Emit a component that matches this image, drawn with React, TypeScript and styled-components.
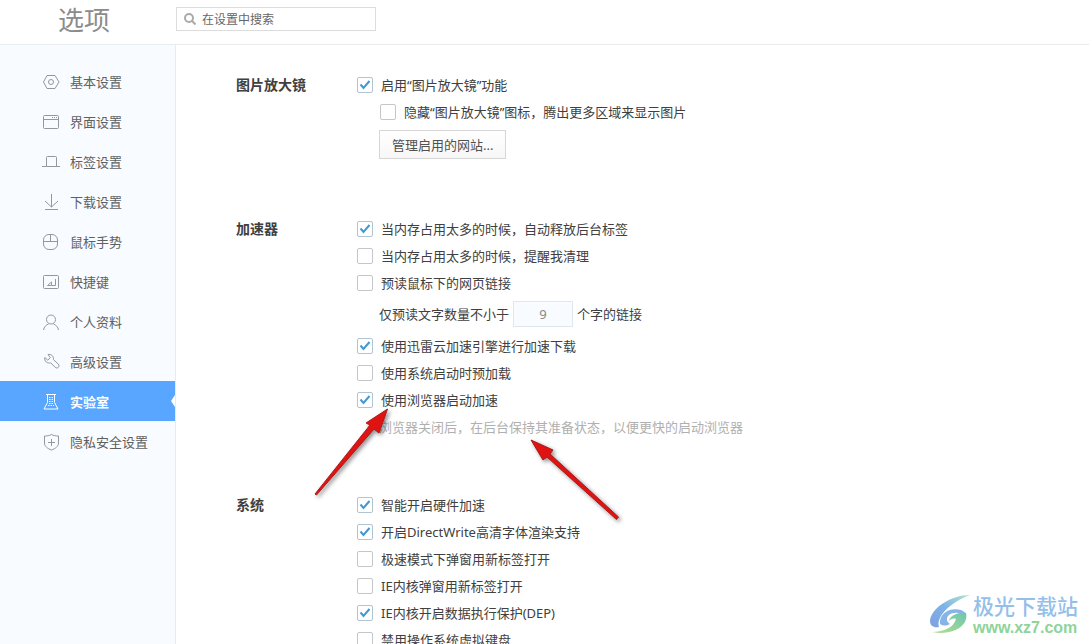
import React from "react";
import styled, { createGlobalStyle, css } from "styled-components";

const GlobalStyle = createGlobalStyle`
  *, *::before, *::after { box-sizing: border-box; }
  body {
    margin: 0;
    background: #fff;
    color: #404040;
    font: 13px/26px "Noto Sans", "Noto Sans CJK SC", sans-serif;
  }
  button, input { font: inherit; }
`;

const Page = styled.div`
  position: relative;
  display: flex;
  flex-direction: column;
  height: 100vh;
  overflow: hidden;
`;

const Header = styled.header`
  display: flex;
  align-items: center;
  flex: none;
  height: 45px;
  padding-bottom: 6px;
  border-bottom: 1px solid #e9ecef;
`;

const Title = styled.h1`
  width: 176px;
  margin: 0;
  padding: 2px 0 0 58px;
  color: #8c8c8c;
  font-size: 26px;
  font-weight: 400;
  line-height: 36px;
`;

const SearchBox = styled.label`
  display: flex;
  align-items: center;
  gap: 6px;
  width: 200px;
  height: 24px;
  padding: 0 7px;
  border: 1px solid #dcdcdc;
`;

const SearchInput = styled.input`
  flex: 1;
  min-width: 0;
  padding: 2px 0 0;
  border: 0;
  outline: 0;
  background: none;
  color: #555;
  font-size: 12px;
  line-height: 20px;
  &::placeholder { color: #666; opacity: 1; }
`;

const Body = styled.div`
  display: flex;
  flex: 1;
  min-height: 0;
`;

const Sidebar = styled.nav`
  flex: none;
  width: 176px;
  padding-top: 16px;
  border-right: 1px solid #e6ebf0;
  background: #f8fbff;
`;

const NavLink = styled.a<{ $active?: boolean }>`
  position: relative;
  display: flex;
  align-items: center;
  gap: 10px;
  height: 40px;
  padding: 2px 0 0 42px;
  color: #606060;
  text-decoration: none;
  svg { color: #94989c; }
  ${(p) =>
    p.$active &&
    css`
      background: #58a6ff;
      color: #fff;
      font-weight: 700;
      svg { color: #fff; }
      &::after {
        content: "";
        position: absolute;
        right: 0;
        top: 14px;
        border: 6px solid transparent;
        border-left-width: 0;
        border-right: 4px solid #fff;
      }
    `}
`;

const Content = styled.main`
  flex: 1;
  min-width: 0;
  padding: 27px 20px 27px 60px;
  overflow-y: auto;
  scrollbar-width: none;
`;

const Section = styled.section`
  display: grid;
  grid-template-columns: 121px 1fr;
  padding-bottom: 51px;
`;

const SectionTitle = styled.h2`
  margin: 0;
  font-size: 14px;
  font-weight: 700;
  line-height: 26px;
`;

const CheckRow = styled.label<{ $nested?: boolean }>`
  display: flex;
  align-items: center;
  gap: 8px;
  height: 26px;
  margin: 0 0 1px ${(p) => (p.$nested ? 23 : 0)}px;
  white-space: nowrap;
`;

const Box = styled.span`
  position: relative;
  display: flex;
  flex: none;
  width: 16px;
  height: 16px;
  svg {
    position: absolute;
    inset: 0;
    visibility: hidden;
    pointer-events: none;
  }
  input:checked + svg { visibility: visible; }
`;

const BoxInput = styled.input`
  appearance: none;
  width: 16px;
  height: 16px;
  margin: 0;
  border: 1px solid #c4c7ca;
  border-radius: 2px;
  background: #fff;
  &:checked { border-color: #b0c4d2; }
`;

const SubBlock = styled.div`
  display: flex;
  align-items: center;
  gap: 4px;
  margin: 5px 0 6px 22px;
  white-space: nowrap;
`;

const PlainButton = styled.button`
  height: 29px;
  padding: 0 12px;
  border: 1px solid #d6d6d6;
  background: linear-gradient(#fff, #f7f7f7);
  color: #505050;
  line-height: 26px;
`;

const CountInput = styled.input`
  width: 60px;
  height: 26px;
  padding: 0;
  border: 1px solid #dfe8f0;
  background: #f8fbff;
  color: #888;
  text-align: center;
`;

const Hint = styled.p`
  margin: 0 0 1px 22px;
  color: #b0b0b0;
  white-space: nowrap;
`;

const Arrows = styled.svg`
  position: absolute;
  left: 0;
  top: 0;
  pointer-events: none;
  filter: drop-shadow(2px 2px 2px rgba(0, 0, 0, 0.45));
`;

const Watermark = styled.div`
  position: absolute;
  right: 11px;
  bottom: 5px;
  display: flex;
  align-items: flex-start;
  gap: 2px;
`;

const MarkText = styled.div`
  display: flex;
  flex-direction: column;
`;

const MarkName = styled.span`
  color: #94bfea;
  font-size: 21px;
  font-weight: 500;
  line-height: 22px;
`;

const MarkUrl = styled.span`
  color: #8fd39a;
  font: 700 16px/22px "Liberation Sans", sans-serif;
`;

const icons: Record<string, React.ReactNode> = {
  basic: (
    <>
      <path d="M5 2.5h8l4 6.5-4 6.5H5L1.500 9z" />
      <circle cx="9" cy="9" r="2.500" />
    </>
  ),
  window: (
    <>
      <rect x="1.500" y="2.500" width="15" height="13" rx="1" />
      <path d="M1.500 6.500h15M10 4.500h1M12 4.500h1M14 4.500h1" />
    </>
  ),
  tab: <path d="M0 13.500h4.500M14 13.500h4M4.500 13.500v-9a1 1 0 0 1 1-1h8a1 1 0 0 1 1 1v9M4.500 13.500h10" />,
  download: <path d="M9.500 1v13M3 8l6.500 6L16 8M3 16.500h13" />,
  mouse: (
    <>
      <rect x="1.500" y="1.500" width="14" height="15" rx="5.500" />
      <path d="M1.500 8.500h14M8.500 1.500v7" />
    </>
  ),
  keyboard: (
    <>
      <rect x="1.500" y="2.500" width="15" height="13" rx="1" />
      <path d="M13.500 6v6.500h-4" />
      <path d="M9.500 9v3.500h-4z" />
    </>
  ),
  person: (
    <>
      <circle cx="9" cy="6.500" r="4.500" />
      <path d="M1.500 17c.5-3 2.500-5 5-6M16.500 17c-.5-3-2.500-5-5-6" />
    </>
  ),
  wrench: (
    <path d="M6 1.500c3-.8 6 1.500 5.300 5l4.900 4.500c2.300 2.400-.8 5.300-3 3.300L8.700 9.800C5.500 10.800 2 8.500 2.800 4.500l3 2.700L8.300 4.700z" />
  ),
  flask: (
    <>
      <path d="M4 1.500h10M5.500 1.500v8l-3.500 6.500h14l-3.500-6.500v-8" />
      <path d="M7 4.500h4M7 6.500h4M7 8.500h4M7 10.500h4M6 12.500h6" strokeDasharray="1.500 1" />
    </>
  ),
  shield: <path d="M9.500 1.500c2 1.200 4.500 1.500 7 1.500v7c0 3.500-3 5.500-7 7-4-1.500-7-3.500-7-7V3c2.500 0 5-.3 7-1.500zM6 9.500h7M9.500 6v7" />,
};

const NavIcon = ({ name }: { name: string }) => (
  <svg width="18" height="18" viewBox="0 0 18 18" fill="none" stroke="currentColor" aria-hidden="true">
    {icons[name]}
  </svg>
);

const navItems = [
  ["basic", "基本设置"],
  ["window", "界面设置"],
  ["tab", "标签设置"],
  ["download", "下载设置"],
  ["mouse", "鼠标手势"],
  ["keyboard", "快捷键"],
  ["person", "个人资料"],
  ["wrench", "高级设置"],
  ["flask", "实验室"],
  ["shield", "隐私安全设置"],
];

type CheckProps = { checked?: boolean; nested?: boolean; children: React.ReactNode };

const Check = ({ checked, nested, children }: CheckProps) => (
  <CheckRow $nested={nested}>
    <Box>
      <BoxInput type="checkbox" defaultChecked={checked} />
      <svg width="16" height="16" viewBox="0 0 16 16" fill="none" stroke="#4398d3" strokeWidth="2" aria-hidden="true">
        <path d="M3.500 7.500l3 3.500 6-7" />
      </svg>
    </Box>
    <span>{children}</span>
  </CheckRow>
);

export default function App() {
  return (
    <Page>
      <GlobalStyle />
      <Header>
        <Title>选项</Title>
        <SearchBox>
          <svg width="12" height="12" viewBox="0 0 12 12" fill="none" stroke="#aaa" strokeWidth="2" aria-hidden="true">
            <circle cx="5" cy="5" r="4" />
            <path d="M8 8l3.500 3.500" />
          </svg>
          <SearchInput type="text" placeholder="在设置中搜索" aria-label="在设置中搜索" />
        </SearchBox>
      </Header>
      <Body>
        <Sidebar>
          {navItems.map(([icon, label]) => (
            <NavLink key={icon} href={`#${icon}`} $active={icon === "flask"}>
              <NavIcon name={icon} />
              {label}
            </NavLink>
          ))}
        </Sidebar>
        <Content>
          <Section>
            <SectionTitle>图片放大镜</SectionTitle>
            <div>
              <Check checked>启用“图片放大镜”功能</Check>
              <Check nested>隐藏“图片放大镜”图标，腾出更多区域来显示图片</Check>
              <SubBlock>
                <PlainButton type="button">管理启用的网站...</PlainButton>
              </SubBlock>
            </div>
          </Section>
          <Section>
            <SectionTitle>加速器</SectionTitle>
            <div>
              <Check checked>当内存占用太多的时候，自动释放后台标签</Check>
              <Check>当内存占用太多的时候，提醒我清理</Check>
              <Check>预读鼠标下的网页链接</Check>
              <SubBlock>
                <label htmlFor="min-chars">仅预读文字数量不小于</label>
                <CountInput id="min-chars" type="text" defaultValue="9" />
                <span>个字的链接</span>
              </SubBlock>
              <Check checked>使用迅雷云加速引擎进行加速下载</Check>
              <Check>使用系统启动时预加载</Check>
              <Check checked>使用浏览器启动加速</Check>
              <Hint>浏览器关闭后，在后台保持其准备状态，以便更快的启动浏览器</Hint>
            </div>
          </Section>
          <Section>
            <SectionTitle>系统</SectionTitle>
            <div>
              <Check checked>智能开启硬件加速</Check>
              <Check checked>开启DirectWrite高清字体渲染支持</Check>
              <Check>极速模式下弹窗用新标签打开</Check>
              <Check>IE内核弹窗用新标签打开</Check>
              <Check checked>IE内核开启数据执行保护(DEP)</Check>
              <Check>禁用操作系统虚拟键盘</Check>
            </div>
          </Section>
        </Content>
      </Body>
      <Arrows width="640" height="540" viewBox="0 0 640 540" fill="#e01212" stroke="#a81c1c" aria-hidden="true">
        <path d="M315 494L370 425l-4-2 21.500-14-8.500 24-5-4-57.500 66z" />
        <path d="M531 440l22 10-3 4 68.500 63-2 2.500L547 457l-4 3z" />
      </Arrows>
      <Watermark>
        <svg width="42" height="40" viewBox="0 0 42 40" aria-hidden="true">
          <defs>
            <linearGradient id="swirl" x1="1" y1="0" x2="0" y2="1">
              <stop offset="0" stopColor="#b4e4cc" />
              <stop offset="0.5" stopColor="#7db4e8" />
              <stop offset="1" stopColor="#7f9fe0" />
            </linearGradient>
            <linearGradient id="leaf" x1="1" y1="0" x2="0" y2="1">
              <stop offset="0" stopColor="#6fc4b0" />
              <stop offset="1" stopColor="#b5e08a" />
            </linearGradient>
          </defs>
          <path fill="url(#swirl)" d="M41 0C22 0 2 13 1 26c0 5 4 7 9 6C7 22 20 8 41 0z" />
          <path fill="#86b4e8" d="M11 29C10 19 20 12 32 15c3 1 5 3 5 5-7-3-15-3-18 1-2 3-1 6 2 8-4 2-7 2-10 0z" />
          <path fill="url(#leaf)" d="M37 18c3 13-13 23-34 19 12 0 22-5 24-13-3-1-5 0-7 2 1-6 10-9 17-8z" />
        </svg>
        <MarkText>
          <MarkName>极光下载站</MarkName>
          <MarkUrl>www.xz7.com</MarkUrl>
        </MarkText>
      </Watermark>
    </Page>
  );
}
